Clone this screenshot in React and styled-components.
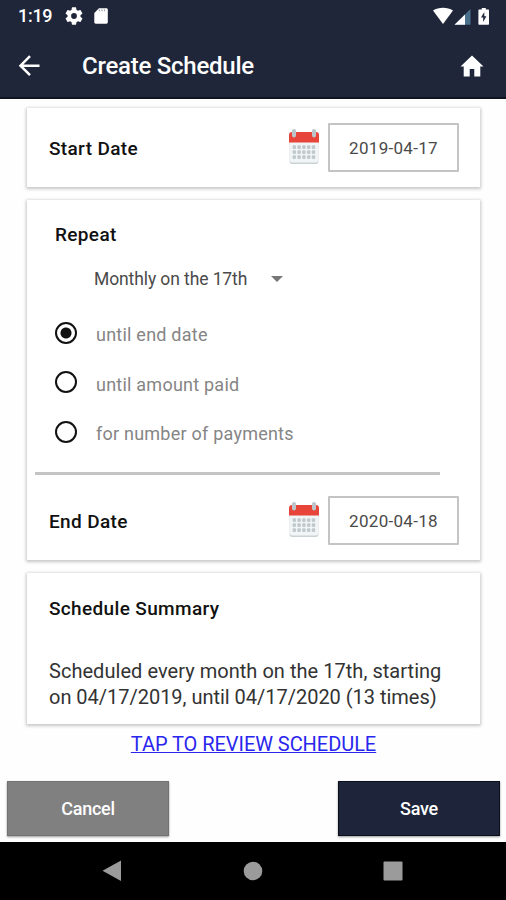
import styled, { createGlobalStyle } from "styled-components";

const dots = [0, 1, 2].flatMap((row) => [0, 1, 2, 3, 4].map((col) => ({ row, col })));

const SettingsIcon = () => (
    <svg width="18" height="18" viewBox="2 2 20 20" fill="#fff">
        <path d="M19.14 12.94c.04-.3.06-.61.06-.94s-.02-.64-.07-.94l2.03-1.58a.49.49 0 0 0 .12-.61l-1.92-3.32a.49.49 0 0 0-.59-.22l-2.39.96a7 7 0 0 0-1.62-.94l-.36-2.54a.48.48 0 0 0-.48-.41h-3.84a.48.48 0 0 0-.47.41l-.36 2.54a7 7 0 0 0-1.62.94l-2.39-.96a.48.48 0 0 0-.59.22L2.74 8.87a.48.48 0 0 0 .12.61l2.03 1.58a7 7 0 0 0 0 1.88l-2.03 1.58a.49.49 0 0 0-.12.61l1.92 3.32c.12.22.37.29.59.22l2.39-.96c.5.38 1.03.7 1.62.94l.36 2.54c.05.24.24.41.48.41h3.84c.24 0 .44-.17.47-.41l.36-2.54a7 7 0 0 0 1.62-.94l2.39.96c.22.08.47 0 .59-.22l1.92-3.32a.48.48 0 0 0-.12-.61zM12 15.2a3.2 3.2 0 1 1 0-6.4 3.2 3.2 0 0 1 0 6.4z" />
    </svg>
)

const SdCardIcon = () => (
    <svg width="14" height="16" viewBox="0 0 14 16">
        <path d="M5 .3h7.4c.8 0 1.4.6 1.4 1.4v12.6c0 .8-.6 1.4-1.4 1.4H1.7c-.8 0-1.4-.6-1.4-1.4V5z" fill="#fff" />
        <path d="M5.5 1.500v1.700M8 1.500v1.700M10.5 1.500v1.700" stroke="#9a9ea8" strokeWidth="1.2" />
    </svg>
)

const StatusIcons = () => (
    <svg width="60" height="19" viewBox="0 0 60 19">
        <path d="M1 3.5C6.5 -.3 15.500 -.3 21 3.500L11 17z" fill="#fff" />
        <path d="M38.500 2v15.700H22.500z" fill="#49708b" />
        <path d="M33 7.400v10.300H22.500z" fill="#fff" />
        <path d="M49.800 1h4v1.600h2.200c.6 0 1 .4 1 1v13.100c0 .6-.4 1-1 1h-8.600c-.6 0-1-.4-1-1V3.600c0-.6.4-1 1-1h2.400z" fill="#fff" />
        <path d="M52.300 5l-3.300 5.500h2.200v4.500l3.200-5.800h-2.100z" fill="#20263a" />
    </svg>
)

const BackIcon = () => (
    <svg width="22" height="22" viewBox="0 0 22 22" fill="none" stroke="#fff" strokeWidth="2.500">
        <path d="M21.500 10.700H3M12 1.200L2.500 10.700l9.500 9.500" />
    </svg>
)

const HomeIcon = () => (
    <svg width="24" height="24" viewBox="0 0 24 24" fill="#fff">
        <path d="M9.700 22.500v-7.500h4.600v7.500h6V12.500h3.200L12 1.500.5 12.500h3.200v10z" />
    </svg>
)

const CalendarIcon = () => (
    <svg width="32" height="36" viewBox="0 0 32 36">
        <path d="M1.500 12h29v20a3 3 0 0 1-3 3h-23a3 3 0 0 1-3-3z" fill="#c9d2d5" />
        <path d="M1.500 12h29v18.500a3 3 0 0 1-3 3h-23a3 3 0 0 1-3-3z" fill="#f1f5f6" />
        <path d="M1 13.500V6a3 3 0 0 1 3-3h24a3 3 0 0 1 3 3v7.500z" fill="#e8453a" />
        <rect x="4" y="0" width="4" height="8.500" rx="2" fill="#bcc5ca" />
        <rect x="24" y="0" width="4" height="8.500" rx="2" fill="#bcc5ca" />
        {dots.map(({ row, col }) => (
            <rect key={row + "-" + col} x={4.6 + col * 4.8} y={16.300 + row * 5} width="3.400" height="3.600" rx="1" fill="#c0c9cd" />
        ))}
    </svg>
)

const DateRow = ({ label, value }) => (
    <StyledDateRow>
        <DateLabel>{label}</DateLabel>
        <CalendarIcon />
        <DateField>{value}</DateField>
    </StyledDateRow>
)

const App = () => {
    return (
        <Screen>
            <GlobalStyle />
            <Header>
                <StatusBar>
                    <Clock>1:19</Clock>
                    <SettingsIcon />
                    <SdCardIcon />
                    <Spacer />
                    <StatusIcons />
                </StatusBar>
                <TitleBar>
                    <BackIcon />
                    <Title>Create Schedule</Title>
                    <HomeIcon />
                </TitleBar>
            </Header>
            <Content>
                <Card $height={79}>
                    <DateRow label="Start Date" value="2019-04-17" />
                </Card>
                <Card $height={360}>
                    <RepeatHeading>Repeat</RepeatHeading>
                    <Frequency>
                        <span>Monthly on the 17th</span>
                        <Caret />
                    </Frequency>
                    <Options>
                        <Option><Radio $checked /><OptionLabel>until end date</OptionLabel></Option>
                        <Option><Radio /><OptionLabel>until amount paid</OptionLabel></Option>
                        <Option><Radio /><OptionLabel>for number of payments</OptionLabel></Option>
                    </Options>
                    <Divider />
                    <DateRow label="End Date" value="2020-04-18" />
                </Card>
                <Card $height={151}>
                    <SummaryHeading>Schedule Summary</SummaryHeading>
                    <SummaryText>
                        <SummaryLine $spacing={0.04}>Scheduled every month on the 17th, starting</SummaryLine>
                        <SummaryLine $spacing={-0.02}>on 04/17/2019, until 04/17/2020 (13 times)</SummaryLine>
                    </SummaryText>
                </Card>
            </Content>
            <ReviewLink href="#">TAP TO REVIEW SCHEDULE</ReviewLink>
            <Actions>
                <Button $color="#808080" $edge="#727272">Cancel</Button>
                <Button $color="#1e2439" $edge="#0b0e1b">Save</Button>
            </Actions>
            <NavBar>
                <svg width="20" height="22" viewBox="0 0 20 22" fill="#9b9b9b"><path d="M19 .5v20.500L.500 10.800z" /></svg>
                <svg width="20" height="20" viewBox="0 0 20 20" fill="#9b9b9b"><circle cx="10" cy="10" r="9.300" /></svg>
                <svg width="20" height="20" viewBox="0 0 20 20" fill="#9b9b9b"><rect x=".5" y=".5" width="19" height="19" rx="1" /></svg>
            </NavBar>
        </Screen>
    )
}

const GlobalStyle = createGlobalStyle`
body{
    margin: 0;
    background-color: #fefefe;
    font-family: Roboto, sans-serif;
}
*{
    box-sizing: border-box;
}
svg{
    display: block;
    flex-shrink: 0;
}
`
const Screen = styled.div`
width: 506px;
height: 900px;
display: flex;
flex-direction: column;
overflow: hidden;
`
const Header = styled.header`
height: 99px;
flex-shrink: 0;
background-color: #20263a;
border-bottom: 2px solid #10131d;
color: white;
`
const StatusBar = styled.div`
height: 32px;
display: flex;
align-items: center;
padding: 0 14px 0 18px;
`
const Clock = styled.span`
width: 47px;
font-size: 18px;
line-height: 20px;
font-weight: 500;
letter-spacing: -0.3px;
& + svg + svg{
    margin-left: 11px;
}
`
const Spacer = styled.div`
flex: 1;
`
const TitleBar = styled.div`
height: 67px;
display: flex;
align-items: center;
padding: 0 22px 0 18px;
`
const Title = styled.h1`
flex: 1;
margin: 0 0 0 42px;
font-size: 24px;
font-weight: 500;
letter-spacing: -0.25px;
`
const Content = styled.main`
display: flex;
flex-direction: column;
gap: 13px;
padding: 9px 26px 0 27px;
`
const Card = styled.section`
height: ${(props) => props.$height}px;
display: flex;
flex-direction: column;
background-color: white;
box-shadow: 0 1px 3px 1px rgba(0, 0, 0, 0.22);
`
const StyledDateRow = styled.div`
height: 79px;
display: flex;
align-items: center;
padding: 0 21px 0 22px;
svg{
    margin: -2px 8px 0 0;
}
`
const Heading = styled.h2`
flex: 1;
margin: 0;
font-size: 19px;
line-height: 24px;
font-weight: 500;
letter-spacing: 0.35px;
color: #111;
`
const DateLabel = styled(Heading)`
padding-top: 2px;
`
const DateField = styled.div`
width: 131px;
height: 49px;
display: flex;
align-items: center;
justify-content: center;
border: 2px solid #c4c4c4;
border-radius: 1px;
font-size: 17px;
letter-spacing: 0.3px;
color: #4a4a4a;
`
const RepeatHeading = styled(Heading)`
flex: none;
margin: 23px 0 0 28px;
`
const Frequency = styled.div`
display: flex;
align-items: center;
gap: 24px;
height: 24px;
margin: 20px 0 0 67px;
font-size: 17.500px;
letter-spacing: -0.1px;
color: #4a4a4a;
`
const Caret = styled.span`
border: 6px solid transparent;
border-top-color: #777;
border-bottom: none;
`
const Options = styled.div`
padding: 17px 0 0 28px;
`
const Option = styled.div`
height: 49.500px;
display: flex;
align-items: center;
`
const Radio = styled.span`
width: 22px;
height: 22px;
margin-right: 19px;
border: 2px solid #111;
border-radius: 50%;
background: ${(props) => props.$checked ? "radial-gradient(circle, #111 5px, transparent 6px)" : "none"};
`
const OptionLabel = styled.span`
padding-top: 4px;
font-size: 18px;
letter-spacing: 0.23px;
color: #858585;
`
const Divider = styled.div`
width: 405px;
height: 3px;
margin: 15.500px 0 6.500px 8px;
background-color: #c4c4c4;
`
const SummaryHeading = styled(Heading)`
flex: none;
margin: 24px 0 0 22px;
`
const SummaryText = styled.p`
margin: 37px 0 0 22px;
font-size: 20px;
line-height: 26px;
white-space: nowrap;
color: #333;
`
const SummaryLine = styled.span`
display: block;
letter-spacing: ${(props) => props.$spacing}px;
`
const ReviewLink = styled.a`
align-self: center;
margin: 8px 0 0 1px;
font-size: 20px;
line-height: 24px;
letter-spacing: -0.05px;
text-decoration-thickness: 1px;
color: #2a26ee;
`
const Actions = styled.div`
display: flex;
justify-content: space-between;
padding: 0 6px 0 7px;
margin-top: auto;
`
const Button = styled.button`
width: 162px;
height: 55px;
padding: 0;
border: 1px solid ${(props) => props.$edge};
background-color: ${(props) => props.$color};
box-shadow: 0 1px 2px rgba(0, 0, 0, 0.4);
font-family: inherit;
font-size: 18px;
font-weight: 500;
letter-spacing: -0.25px;
color: white;
`
const NavBar = styled.nav`
height: 58px;
flex-shrink: 0;
display: flex;
align-items: center;
justify-content: space-between;
margin-top: 6px;
padding: 0 103px 0 102px;
background-color: black;
`
export default App;
